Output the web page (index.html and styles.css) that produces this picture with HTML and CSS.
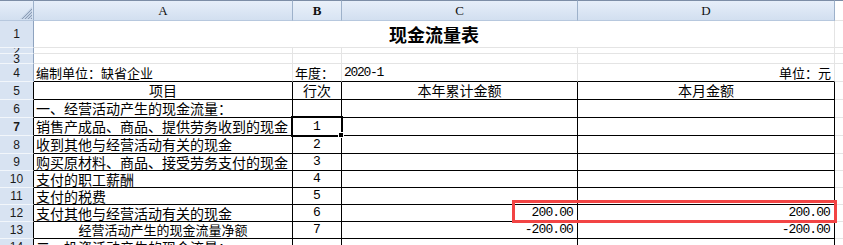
FILE: index.html
```html
<!DOCTYPE html>
<html lang="zh-CN">
<head>
<meta charset="utf-8">
<title>现金流量表</title>
<link rel="stylesheet" href="styles.css">
</head>
<body>
<div class="sheet">
  <!-- column header row -->
  <div class="ch corner">
    <svg class="tri" width="12" height="12" viewBox="0 0 12 12">
      <polygon points="12,0 12,12 0,12" fill="#c3d1e4"/>
      <line x1="12" y1="2" x2="2" y2="12" stroke="#8b9db6" stroke-width="1"/>
      <line x1="12" y1="5" x2="5" y2="12" stroke="#8b9db6" stroke-width="1"/>
      <line x1="12" y1="8" x2="8" y2="12" stroke="#8b9db6" stroke-width="1"/>
      <line x1="12" y1="11" x2="11" y2="12" stroke="#8b9db6" stroke-width="1"/>
    </svg>
  </div>
  <div class="ch">A</div>
  <div class="ch sel">B</div>
  <div class="ch">C</div>
  <div class="ch">D</div>
  <div class="ch end"></div>

  <!-- row 1 -->
  <div class="rh">1</div>
  <div class="g title">现金流量表</div>
  <div class="x"></div>

  <!-- row 2 -->
  <div class="rh">2</div>
  <div class="g"></div><div class="g"></div><div class="g"></div><div class="g"></div>
  <div class="x"></div>

  <!-- row 3 -->
  <div class="rh">3</div>
  <div class="g"></div><div class="g"></div><div class="g"></div><div class="g"></div>
  <div class="x"></div>

  <!-- row 4 -->
  <div class="rh">4</div>
  <div class="g top small">编制单位：缺省企业</div>
  <div class="g top small">年度：</div>
  <div class="g top mono">2020-1</div>
  <div class="g top small right">单位：元</div>
  <div class="x"></div>

  <!-- row 5 -->
  <div class="rh k">5</div>
  <div class="t a center">项目</div>
  <div class="t center">行次</div>
  <div class="t center">本年累计金额</div>
  <div class="t center">本月金额</div>
  <div class="x"></div>

  <!-- row 6 -->
  <div class="rh k">6</div>
  <div class="t a">一、经营活动产生的现金流量：</div>
  <div class="t num"></div>
  <div class="t"></div>
  <div class="t"></div>
  <div class="x"></div>

  <!-- row 7 -->
  <div class="rh k bold">7</div>
  <div class="t a">销售产成品、商品、提供劳务收到的现金</div>
  <div class="t num">1</div>
  <div class="t"></div>
  <div class="t"></div>
  <div class="x"></div>

  <!-- row 8 -->
  <div class="rh k">8</div>
  <div class="t a">收到其他与经营活动有关的现金</div>
  <div class="t num">2</div>
  <div class="t"></div>
  <div class="t"></div>
  <div class="x"></div>

  <!-- row 9 -->
  <div class="rh k">9</div>
  <div class="t a">购买原材料、商品、接受劳务支付的现金</div>
  <div class="t num">3</div>
  <div class="t"></div>
  <div class="t"></div>
  <div class="x"></div>

  <!-- row 10 -->
  <div class="rh k">10</div>
  <div class="t a">支付的职工薪酬</div>
  <div class="t num">4</div>
  <div class="t"></div>
  <div class="t"></div>
  <div class="x"></div>

  <!-- row 11 -->
  <div class="rh k">11</div>
  <div class="t a">支付的税费</div>
  <div class="t num">5</div>
  <div class="t"></div>
  <div class="t"></div>
  <div class="x"></div>

  <!-- row 12 -->
  <div class="rh k">12</div>
  <div class="t a">支付其他与经营活动有关的现金</div>
  <div class="t num">6</div>
  <div class="t amt">200.00</div>
  <div class="t amt">200.00</div>
  <div class="x"></div>

  <!-- row 13 -->
  <div class="rh k">13</div>
  <div class="t a center small">经营活动产生的现金流量净额</div>
  <div class="t num">7</div>
  <div class="t amt">-200.00</div>
  <div class="t amt">-200.00</div>
  <div class="x"></div>

  <!-- row 14 -->
  <div class="rh k">14</div>
  <div class="t a">二、投资活动产生的现金流量：</div>
  <div class="t num"></div>
  <div class="t"></div>
  <div class="t"></div>
  <div class="x"></div>

  <!-- overlays -->
  <div class="selbox"></div>
  <div class="handle"></div>
  <div class="redbox"></div>
</div>
</body>
</html>
```

FILE: styles.css
```css
html, body {
  margin: 0;
  padding: 0;
  background: #ffffff;
}

.sheet {
  position: relative;
  width: 843px;
  height: 245px;
  overflow: hidden;
  display: grid;
  grid-template-columns: 34px 259px 49px 236px 257px 8px;
  grid-template-rows: 21px 27px 6px 10px 18px 18px 18px 18px 18px 17px 17px 17px 17px 17px 17px;
  font-family: "Noto Sans CJK SC", "Noto Sans", sans-serif;
  font-size: 14px;
  color: #000;
}

.sheet > div {
  box-sizing: border-box;
  white-space: nowrap;
  display: flex;
  align-items: center;
  line-height: 1;
}

/* column headers */
.ch {
  background: linear-gradient(#e6eef9, #d2dff0);
  border-top: 1px solid #7c8da6;
  border-right: 1px solid #9db1ca;
  border-bottom: 1px solid #b7c8de;
  justify-content: center;
  font-family: "Liberation Serif", serif;
  font-size: 13px;
  color: #111;
}
.ch.sel {
  font-weight: bold;
  background: linear-gradient(#eaf1fa, #d8e4f3);
}
.ch.end {
  background: #ffffff;
  border-right: none;
  border-bottom: 1px solid #e4e4e4;
}
.corner {
  justify-content: flex-end;
  align-items: flex-end !important;
  padding: 0 1px 1px 0;
}
.tri {
  display: block;
}

/* row headers */
.rh {
  overflow: hidden;
  background: #d8e3f2;
  border-right: 1px solid #8ea3bf;
  border-bottom: 1px solid #f2f6fb;
  justify-content: center;
  font-family: "Liberation Sans", sans-serif;
  font-size: 12px;
  color: #1a1a1a;
}
.rh.k {
  border-right-color: #000;
}
.rh.bold {
  font-weight: bold;
}

/* light grid cells (rows 1-4) */
.g {
  border-right: 1px solid #e4e4e4;
  border-bottom: 1px solid #e4e4e4;
  padding-left: 2px;
}
.g.top {
  border-bottom: 1px solid #000;
}
.title {
  grid-column: span 4;
  justify-content: center;
  font-size: 18px;
  font-weight: bold;
  padding-left: 0;
}
.x {
  border-bottom: 1px solid #e4e4e4;
}

/* table cells (rows 5+) */
.t {
  border-right: 1px solid #000;
  border-bottom: 1px solid #000;
  padding-left: 2px;
  padding-bottom: 1px;
}
.center {
  justify-content: center;
  padding-left: 0 !important;
}
.right {
  justify-content: flex-end;
  padding-right: 3px;
}
.small {
  font-size: 13px;
}
.mono {
  font-family: "Liberation Mono", monospace;
  font-size: 13px;
  letter-spacing: -1.3px;
}
.num {
  justify-content: center;
  padding-left: 0 !important;
  font-family: "Liberation Mono", monospace;
  font-size: 13px;
}
.amt {
  justify-content: flex-end;
  padding-right: 4px;
  font-family: "Liberation Mono", monospace;
  font-size: 13px;
  letter-spacing: -0.9px;
}

/* overlays */
.selbox {
  position: absolute;
  left: 291px;
  top: 116px;
  width: 52px;
  height: 21px;
  border: 2px solid #000;
  box-shadow: inset 0 0 0 1px #fff;
}
.handle {
  position: absolute;
  left: 338px;
  top: 132px;
  width: 6px;
  height: 6px;
  background: #000;
  border: 1px solid #fff;
}
.redbox {
  position: absolute;
  left: 512px;
  top: 200px;
  width: 325px;
  height: 23px;
  border: 3px solid #f24444;
}
```
